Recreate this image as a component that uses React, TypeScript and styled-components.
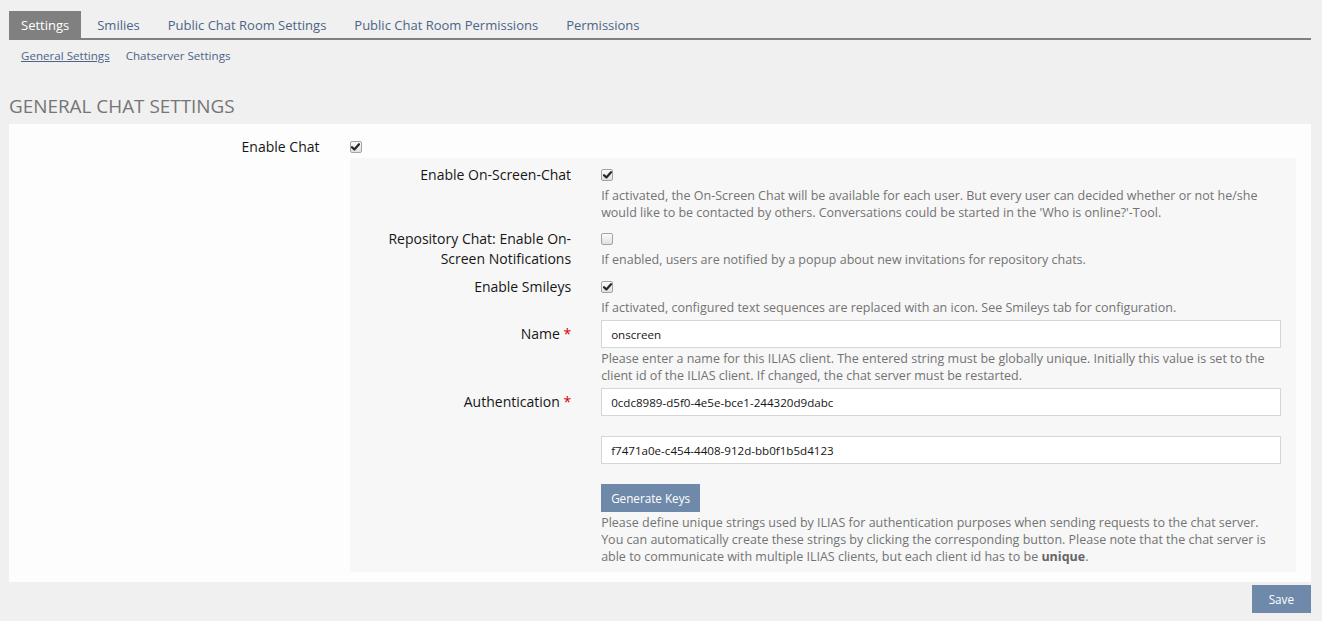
import React from 'react'
import styled, { createGlobalStyle } from 'styled-components'

const GlobalStyle = createGlobalStyle`
  html, body {
    margin: 0;
    padding: 0;
    background: #f0f0f0;
    font-family: "Open Sans", "Liberation Sans", sans-serif;
    color: #161616;
  }
  * {
    box-sizing: border-box;
  }
`

const Page = styled.div`
  padding: 11px 11px 0 9px;
`

const TabBar = styled.div`
  display: flex;
  border-bottom: 2px solid #808080;
`

const Tab = styled.a<{ $active?: boolean }>`
  height: 27px;
  display: flex;
  align-items: center;
  padding: 1px 12px 0;
  margin-right: 4px;
  font-size: 13px;
  color: ${({ $active }) => ($active ? '#ffffff' : '#4c6586')};
  background: ${({ $active }) => ($active ? '#808080' : 'transparent')};
  text-decoration: none;
  cursor: pointer;
`

const SubTabs = styled.div`
  display: flex;
  gap: 16px;
  padding: 7px 12px 0;
  line-height: 17px;
`

const SubTab = styled.a<{ $active?: boolean }>`
  font-size: 11.6px;
  color: #4c6586;
  text-decoration: ${({ $active }) => ($active ? 'underline' : 'none')};
  cursor: pointer;
`

const Heading = styled.h1`
  margin: 32px 0 8px;
  font-size: 18.9px;
  line-height: 20px;
  font-weight: 400;
  color: #757575;
  text-transform: uppercase;
`

const Panel = styled.div`
  background: #fdfdfd;
  padding: 9px 0 10px;
`

const Row = styled.div`
  display: grid;
  grid-template-columns: 25% 75%;
  & + & {
    margin-top: 4px;
  }
`

const Label = styled.div`
  padding: 4px 15px 0;
  text-align: right;
  font-size: 14px;
  line-height: 20px;
  color: #161616;
`

const Required = styled.span`
  color: #d00000;
`

const Control = styled.div`
  padding: 0 15px;
  display: flex;
  flex-direction: column;
  align-items: stretch;
`

const CheckLine = styled.div`
  height: 20px;
  margin-top: 4px;
  display: flex;
  align-items: center;
`

const Box = styled.span`
  width: 12px;
  height: 12px;
  border: 1px solid #a3a3a3;
  border-radius: 2px;
  background: linear-gradient(#fbfbfb, #e0e0e0);
  display: flex;
  align-items: center;
  justify-content: center;
`

const Nested = styled.div`
  margin-top: 1px;
  background: #f7f7f7;
  padding: 3px 0 7px;
`

const Help = styled.div`
  margin-top: 2px;
  font-size: 12.5px;
  line-height: 17px;
  color: #737373;

  b {
    font-weight: 700;
    color: #666666;
  }
`

const Input = styled.input`
  height: 28px;
  width: 100%;
  border: 1px solid #d6d6d6;
  background: #ffffff;
  padding: 0 9px;
  font-family: inherit;
  font-size: 11.6px;
  color: #161616;
  outline: none;

  & + & {
    margin-top: 20px;
  }
`

const Button = styled.button<{ $wide?: boolean }>`
  height: 28px;
  padding: 0 ${({ $wide }) => ($wide ? '17px' : '10px')};
  border: none;
  background: #6f89aa;
  color: #ffffff;
  font-family: inherit;
  font-size: 11.7px;
  cursor: pointer;
`

const KeysButton = styled(Button)`
  align-self: flex-start;
  margin-top: 20px;
`

const Footer = styled.div`
  display: flex;
  justify-content: flex-end;
  padding-top: 3px;
`

const Checkbox = ({ checked }: { checked?: boolean }) => (
  <CheckLine>
    <Box>
      {checked && (
        <svg width="9" height="8" viewBox="0 0 9 8">
          <path d="M1 4.2 L3.4 6.4 L8 1.2" fill="none" stroke="#262626" strokeWidth="2.2" strokeLinecap="round" strokeLinejoin="round" />
        </svg>
      )}
    </Box>
  </CheckLine>
)

export default function App() {
  return (
    <Page>
      <GlobalStyle />
      <TabBar>
        <Tab $active>Settings</Tab>
        <Tab>Smilies</Tab>
        <Tab>Public Chat Room Settings</Tab>
        <Tab>Public Chat Room Permissions</Tab>
        <Tab>Permissions</Tab>
      </TabBar>
      <SubTabs>
        <SubTab $active>General Settings</SubTab>
        <SubTab>Chatserver Settings</SubTab>
      </SubTabs>
      <Heading>General Chat Settings</Heading>
      <Panel>
        <Row>
          <Label>Enable Chat</Label>
          <Control>
            <Checkbox checked />
            <Nested>
              <Row>
                <Label>Enable On-Screen-Chat</Label>
                <Control>
                  <Checkbox checked />
                  <Help>
                    If activated, the On-Screen Chat will be available for each user. But every user can decided whether or not he/she
                    <br />
                    would like to be contacted by others. Conversations could be started in the 'Who is online?'-Tool.
                  </Help>
                </Control>
              </Row>
              <Row>
                <Label>
                  Repository Chat: Enable On-
                  <br />
                  Screen Notifications
                </Label>
                <Control>
                  <Checkbox />
                  <Help>If enabled, users are notified by a popup about new invitations for repository chats.</Help>
                </Control>
              </Row>
              <Row>
                <Label>Enable Smileys</Label>
                <Control>
                  <Checkbox checked />
                  <Help>If activated, configured text sequences are replaced with an icon. See Smileys tab for configuration.</Help>
                </Control>
              </Row>
              <Row>
                <Label>
                  Name <Required>*</Required>
                </Label>
                <Control>
                  <Input defaultValue="onscreen" />
                  <Help>
                    Please enter a name for this ILIAS client. The entered string must be globally unique. Initially this value is set to the
                    <br />
                    client id of the ILIAS client. If changed, the chat server must be restarted.
                  </Help>
                </Control>
              </Row>
              <Row>
                <Label>
                  Authentication <Required>*</Required>
                </Label>
                <Control>
                  <Input defaultValue="0cdc8989-d5f0-4e5e-bce1-244320d9dabc" />
                  <Input defaultValue="f7471a0e-c454-4408-912d-bb0f1b5d4123" />
                  <KeysButton>Generate Keys</KeysButton>
                  <Help>
                    Please define unique strings used by ILIAS for authentication purposes when sending requests to the chat server.
                    <br />
                    You can automatically create these strings by clicking the corresponding button. Please note that the chat server is
                    <br />
                    able to communicate with multiple ILIAS clients, but each client id has to be <b>unique</b>.
                  </Help>
                </Control>
              </Row>
            </Nested>
          </Control>
        </Row>
      </Panel>
      <Footer>
        <Button $wide>Save</Button>
      </Footer>
    </Page>
  )
}
